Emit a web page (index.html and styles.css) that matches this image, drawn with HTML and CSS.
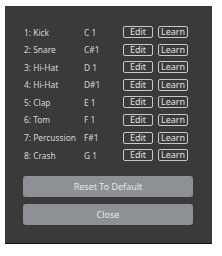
FILE: index.html
```html
<!DOCTYPE html>
<html lang="en">
<head>
    <meta charset="UTF-8">
    <title>Drum Map</title>
    <link rel="stylesheet" href="styles.css">
</head>
<body>
    <!-- Drum pad mapping panel -->
    <div class="panel">
        <div class="pads">
            <div class="pad"><span class="name">1: Kick</span><span class="note">C 1</span><button class="small">Edit</button><button class="small">Learn</button></div>
            <div class="pad"><span class="name">2: Snare</span><span class="note">C#1</span><button class="small">Edit</button><button class="small">Learn</button></div>
            <div class="pad"><span class="name">3: Hi-Hat</span><span class="note">D 1</span><button class="small">Edit</button><button class="small">Learn</button></div>
            <div class="pad"><span class="name">4: Hi-Hat</span><span class="note">D#1</span><button class="small">Edit</button><button class="small">Learn</button></div>
            <div class="pad"><span class="name">5: Clap</span><span class="note">E 1</span><button class="small">Edit</button><button class="small">Learn</button></div>
            <div class="pad"><span class="name">6: Tom</span><span class="note">F 1</span><button class="small">Edit</button><button class="small">Learn</button></div>
            <div class="pad"><span class="name">7: Percussion</span><span class="note">F#1</span><button class="small">Edit</button><button class="small">Learn</button></div>
            <div class="pad"><span class="name">8: Crash</span><span class="note">G 1</span><button class="small">Edit</button><button class="small">Learn</button></div>
        </div>

        <div class="actions">
            <button class="big">Reset To Default</button>
            <button class="big">Close</button>
        </div>
    </div>
</body>
</html>
```

FILE: styles.css
```css
* {
    margin: 0;
    padding: 0;
    box-sizing: border-box;
}

body {
    background-color: #ffffff;
    font-family: 'Noto Sans', 'DejaVu Sans', sans-serif;
    padding: 6px 10px 12px 5px;
}

.panel {
    width: 207px;
    height: 238px;
    background-color: #3a3a3a;
    border-bottom: 1px solid #111;
    padding: 20px 0 0 19px;
}

.pads {
    display: flex;
    flex-direction: column;
    gap: 5.6px;
}

.pad {
    display: flex;
    align-items: center;
    height: 12px;
    color: #d6d6d6;
    font-size: 8.4px;
}

.name {
    width: 60px;
    white-space: nowrap;
}

.note {
    width: 39px;
}

.small {
    width: 30px;
    height: 12px;
    margin-right: 5px;
    background: transparent;
    border: 1px solid #c8c8c8;
    border-radius: 2px;
    color: #e0e0e0;
    font-family: 'Noto Sans', 'DejaVu Sans', sans-serif;
    font-size: 9px;
    line-height: 10px;
}

.actions {
    display: flex;
    flex-direction: column;
    gap: 7px;
    margin-top: 15px;
    margin-left: -1px;
}

.big {
    width: 170px;
    height: 21px;
    background-color: #8d9196;
    border: none;
    border-radius: 3px;
    color: #e6e6e6;
    font-family: 'Noto Sans', 'DejaVu Sans', sans-serif;
    font-size: 9px;
}
```
